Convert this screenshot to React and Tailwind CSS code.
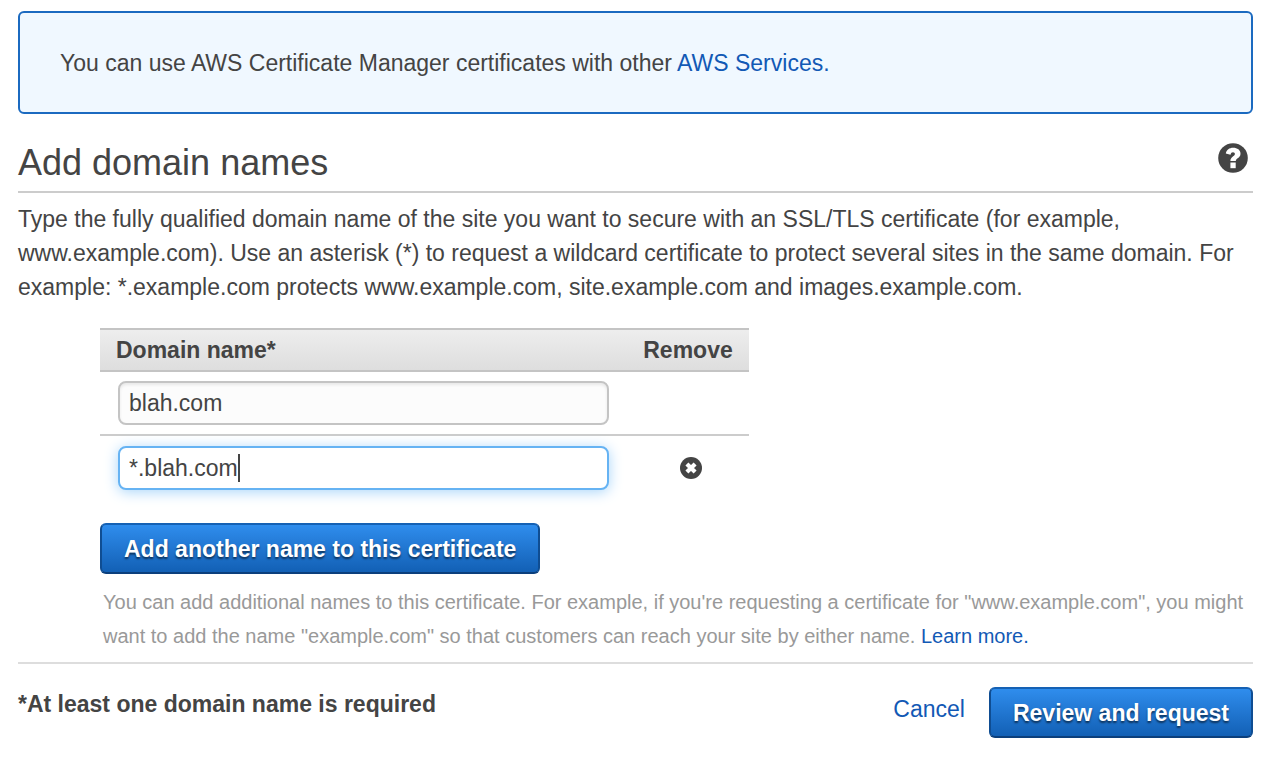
import { useState } from "react";

const primaryButton =
  "cursor-pointer rounded-md border-2 border-t-[#1561b4] border-x-[#0f4d92] border-b-[#0b3f7c] bg-linear-to-b from-[#2f8ded] to-[#1260b5] px-[22px] font-bold text-white h-[51px] [text-shadow:0_2px_2px_rgba(0,0,0,0.55)]";

function HelpIcon() {
  return (
    <svg viewBox="0 0 30 30" className="size-[30px]" aria-hidden="true">
      <circle cx="15" cy="15" r="14.8" fill="#444" />
      <path
        d="M7.8 10.4C8.600 6.900 11.300 4.800 15.100 4.800c4.300 0 7.400 2.300 7.400 5.900 0 4.200-4.700 4.400-4.700 7.400h-5.400c0-4.600 4.500-4.700 4.500-7.100 0-1.100-.8-1.800-1.900-1.800-1.300 0-2.100.8-2.500 2.500z"
        fill="#fff"
      />
      <path d="M12.4 19.500h5.300v5.700h-5.300z" fill="#fff" />
    </svg>
  );
}

function RemoveIcon() {
  return (
    <svg viewBox="0 0 22 22" className="size-[22px]" aria-hidden="true">
      <circle cx="11" cy="11" r="11" fill="#444" />
      <path d="M6.900 6.900l8.200 8.200M15.100 6.900l-8.200 8.200" stroke="#fff" strokeWidth="4.200" />
    </svg>
  );
}

export default function App() {
  const [first, setFirst] = useState("blah.com");
  const [second, setSecond] = useState("*.blah.com");

  return (
    <main className="bg-white pt-[11px] pr-[27px] pb-8 pl-[18px] font-['Liberation_Sans',Arial,sans-serif] text-[23px] leading-[34px] text-[#444]">
      <p className="rounded-md border-2 border-[#1b6ac0] bg-[#f0f8ff] px-10 pt-[33px] pb-8">
        You can use AWS Certificate Manager certificates with other{" "}
        <a href="#services" className="text-[#1259b5]">AWS Services.</a>
      </p>

      <header className="mt-[26px] flex items-start justify-between border-b-2 border-[#ccc] pb-[5px]">
        <h1 className="text-4xl leading-[46px]">Add domain names</h1>
        <button type="button" aria-label="Help" className="mt-[3px] mr-[5px] cursor-pointer">
          <HelpIcon />
        </button>
      </header>

      <p className="mt-[9px]">
        Type the fully qualified domain name of the site you want to secure with an SSL/TLS
        certificate (for example, www.example.com). Use an asterisk (*) to request a wildcard
        certificate to protect several sites in the same domain. For example: *.example.com
        protects www.example.com, site.example.com and images.example.com.
      </p>

      <section className="mt-6 pl-[82px]">
        <table className="w-full max-w-[649px] table-fixed border-separate border-spacing-0">
          <thead>
            <tr className="bg-linear-to-b from-[#eee] to-[#ddd]">
              <th className="h-11 border-y-2 border-[#c4c4c4] pl-4 text-left">Domain name*</th>
              <th className="w-[122px] border-y-2 border-[#c4c4c4] text-center">Remove</th>
            </tr>
          </thead>
          <tbody>
            <tr>
              <td className="border-b-2 border-[#ccc] py-[9px] pl-[18px]">
                <input
                  type="text"
                  aria-label="Domain name 1"
                  value={first}
                  onChange={(e) => setFirst(e.target.value)}
                  className="block h-11 w-[491px] rounded-lg border-2 border-[#c4c4c4] bg-[#fcfcfc] px-[9px] inset-shadow-[0_2px_3px_#e8e8e8] outline-none"
                />
              </td>
              <td className="border-b-2 border-[#ccc]"></td>
            </tr>
            <tr>
              <td className="py-[10px] pl-[18px]">
                <div className="relative w-[491px]">
                  <input
                    type="text"
                    aria-label="Domain name 2"
                    value={second}
                    onChange={(e) => setSecond(e.target.value)}
                    className="block h-11 w-full rounded-lg border-2 border-[#66b3f3] bg-white px-[9px] caret-transparent shadow-[0_2px_14px_#a8d5fa] outline-none"
                  />
                  <span
                    aria-hidden="true"
                    className="pointer-events-none absolute top-2 left-[11px] h-7 border-r-2 border-[#444] whitespace-pre text-transparent"
                  >
                    {second}
                  </span>
                </div>
              </td>
              <td className="pl-1.5 text-center">
                <button type="button" aria-label="Remove domain name 2" className="block mx-auto cursor-pointer">
                  <RemoveIcon />
                </button>
              </td>
            </tr>
          </tbody>
        </table>

        <button type="button" className={`${primaryButton} mt-[23px]`}>
          Add another name to this certificate
        </button>
        <p className="mt-[11px] pl-[3px] text-xl leading-[34px] text-[#999]">
          You can add additional names to this certificate. For example, if you're requesting a
          certificate for "www.example.com", you might want to add the name "example.com" so that
          customers can reach your site by either name.{" "}
          <a href="#learn-more" className="text-[#1259b5]">Learn more.</a>
        </p>
      </section>

      <footer className="mt-[9px] flex items-start justify-between border-t-2 border-[#ddd] pt-[23px]">
        <strong>*At least one domain name is required</strong>
        <div className="flex items-center gap-6">
          <a href="#cancel" className="pb-2 text-[#1259b5]">Cancel</a>
          <button type="button" className={primaryButton}>Review and request</button>
        </div>
      </footer>
    </main>
  );
}
